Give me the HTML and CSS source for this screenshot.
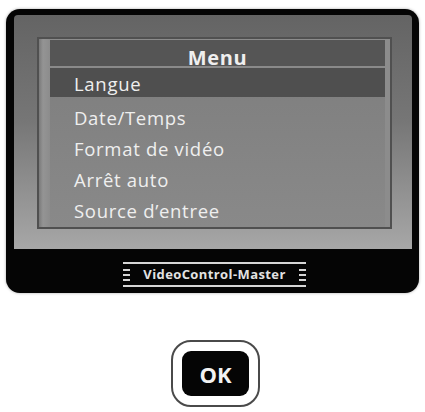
FILE: index.html
```html
<!DOCTYPE html>
<html lang="fr">
<head>
    <meta charset="UTF-8">
    <meta name="viewport" content="width=device-width, initial-scale=1.0">
    <title>VideoControl-Master Menu</title>
    <link rel="stylesheet" href="styles.css">
</head>
<body>
    <div class="device">
        <div class="screen">
            <div class="panel">
                <div class="menu">
                    <div class="menu-title">Menu</div>
                    <div class="menu-item selected">Langue</div>
                    <div class="menu-item first">Date/Temps</div>
                    <div class="menu-item">Format de vidéo</div>
                    <div class="menu-item">Arrêt auto</div>
                    <div class="menu-item">Source d’entree</div>
                </div>
            </div>
        </div>
        <div class="brand-bar">
            <div class="brand">
                <span class="dashes"><i></i><i></i><i></i></span>
                <span class="brand-name">VideoControl-Master</span>
                <span class="dashes"><i></i><i></i><i></i></span>
            </div>
        </div>
    </div>

    <div class="controls">
        <button class="ok-button"><span>OK</span></button>
    </div>
</body>
</html>
```

FILE: styles.css
```css
body {
    margin: 0;
    background-color: #ffffff;
    font-family: "Open Sans", "Noto Sans", Arial, sans-serif;
}
.device {
    width: 413px;
    height: 284px;
    margin: 9px 0 0 6px;
    padding: 6px 7px 0 8px;
    box-sizing: border-box;
    background-color: #050505;
    border-radius: 14px;
    box-shadow: 0 0 3px rgba(0, 0, 0, 0.35);
}
.screen {
    height: 234px;
    padding: 22px 0 0 23px;
    box-sizing: border-box;
    border-radius: 4px 4px 0 0;
    background: linear-gradient(#646464, #767676 45%, #a7a7a7);
}
.panel {
    width: 355px;
    height: 192px;
    box-sizing: border-box;
    border: 2px solid #505050;
    padding: 1px 5px 0 11px;
    background: linear-gradient(90deg, #7a7a7a 0, #949494 4px, #8c8c8c 11px);
    overflow: hidden;
}
.menu {
    height: 100%;
    display: flex;
    flex-direction: column;
    background: linear-gradient(#7d7d7d, #898989);
    color: #efefef;
}
.menu-title {
    height: 28px;
    padding-top: 7px;
    line-height: 21px;
    box-sizing: border-box;
    background-color: #555555;
    border-bottom: 2px solid #8a8a8a;
    text-align: center;
    font-size: 20px;
    font-weight: 700;
    letter-spacing: 0.6px;
    flex-shrink: 0;
}
.menu-item {
    padding-left: 24px;
    font-size: 18.5px;
    letter-spacing: 0.7px;
    line-height: 31px;
    flex-shrink: 0;
}
.menu-item.selected {
    height: 29px;
    padding-top: 2px;
    line-height: 27px;
    box-sizing: border-box;
    background-color: #4f4f4f;
}
.menu-item.first {
    margin-top: 5px;
}
.brand-bar {
    height: 44px;
    padding-top: 13px;
    box-sizing: border-box;
    display: flex;
    justify-content: center;
}
.brand {
    width: 183px;
    height: 25px;
    box-sizing: border-box;
    margin-left: 3px;
    border-top: 2px solid #d6d6d6;
    border-bottom: 2px solid #d6d6d6;
    display: flex;
    justify-content: space-between;
    align-items: center;
    color: #e2e2e2;
}
.brand-name {
    font-size: 13px;
    font-weight: 700;
    letter-spacing: 0.4px;
    line-height: 21px;
}
.dashes {
    display: flex;
    flex-direction: column;
    gap: 3px;
}
.dashes i {
    display: block;
    width: 7px;
    height: 2px;
    background-color: #d6d6d6;
}
.controls {
    display: flex;
    justify-content: center;
    padding-left: 6px;
    margin-top: 47px;
}
.ok-button {
    width: 89px;
    height: 67px;
    padding: 9px;
    box-sizing: border-box;
    border: 2px solid #4a4a4a;
    border-radius: 20px;
    background-color: #ffffff;
    cursor: pointer;
}
.ok-button span {
    display: flex;
    height: 100%;
    align-items: center;
    justify-content: center;
    background-color: #050505;
    border-radius: 9px;
    color: #f2f2f2;
    font-family: "Open Sans", Arial, sans-serif;
    font-size: 22px;
    font-weight: 700;
}
```
